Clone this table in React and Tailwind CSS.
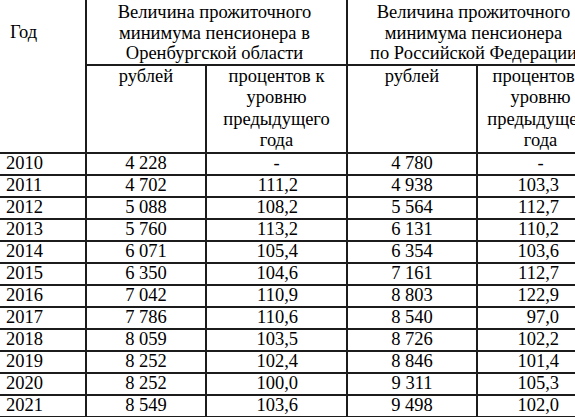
import React from 'react';

const rows = [
  ['2010', '4 228', '-', '4 780', '-'],
  ['2011', '4 702', '111,2', '4 938', '103,3'],
  ['2012', '5 088', '108,2', '5 564', '112,7'],
  ['2013', '5 760', '113,2', '6 131', '110,2'],
  ['2014', '6 071', '105,4', '6 354', '103,6'],
  ['2015', '6 350', '104,6', '7 161', '112,7'],
  ['2016', '7 042', '110,9', '8 803', '122,9'],
  ['2017', '7 786', '110,6', '8 540', '97,0'],
  ['2018', '8 059', '103,5', '8 726', '102,2'],
  ['2019', '8 252', '102,4', '8 846', '101,4'],
  ['2020', '8 252', '100,0', '9 311', '105,3'],
  ['2021', '8 549', '103,6', '9 498', '102,0'],
];

const cell = 'border-2 border-[#1c1c1c] p-0';

const App = () => {
  return (
    <div className="w-[575px] h-[417px] overflow-hidden bg-white">
      <table className="table-fixed border-collapse text-[18.5px] text-black -ml-[2px] -mt-[2px] w-[605px] font-['Liberation_Serif','Times_New_Roman',serif]">
        <colgroup>
          <col className="w-[87px]" />
          <col className="w-[120px]" />
          <col className="w-[141px]" />
          <col className="w-[130px]" />
          <col className="w-[127px]" />
        </colgroup>
        <thead>
          <tr className="h-[64px]">
            <th rowSpan={2} className={`${cell} align-top font-normal text-left pl-[10px] pt-[22px] leading-[20px]`}>
              Год
            </th>
            <th colSpan={2} className={`${cell} align-top font-normal text-center pt-[2px] leading-[20.5px] pr-[4px]`}>
              Величина прожиточного
              <br />
              минимума пенсионера в
              <br />
              Оренбургской области
            </th>
            <th colSpan={2} className={`${cell} align-top font-normal text-center pt-[2px] leading-[20.5px] pr-[4px]`}>
              Величина прожиточного
              <br />
              минимума пенсионера
              <br />
              по Российской Федерации
            </th>
          </tr>
          <tr className="h-[87px]">
            <th className={`${cell} align-top font-normal text-center leading-[21.5px]`}>рублей</th>
            <th className={`${cell} align-top font-normal text-center leading-[21.5px]`}>
              процентов к
              <br />
              уровню
              <br />
              предыдущего
              <br />
              года
            </th>
            <th className={`${cell} align-top font-normal text-center leading-[21.5px]`}>рублей</th>
            <th className={`${cell} align-top font-normal text-center leading-[21.5px]`}>
              процентов к
              <br />
              уровню
              <br />
              предыдущего
              <br />
              года
            </th>
          </tr>
        </thead>
        <tbody>
          {rows.map(([year, rub1, pct1, rub2, pct2]) => (
            <tr key={year} className="h-[22px] leading-[19px]">
              <td className={`${cell} text-left pl-[6px]`}>{year}</td>
              <td className={`${cell} text-center`}>{rub1}</td>
              <td className={`${cell} ${pct1 === '-' ? 'text-center' : 'text-right pr-[48px]'}`}>{pct1}</td>
              <td className={`${cell} text-center`}>{rub2}</td>
              <td className={`${cell} ${pct2 === '-' ? 'text-center' : 'text-right pr-[44px]'}`}>{pct2}</td>
            </tr>
          ))}
        </tbody>
      </table>
    </div>
  );
};

export default App;
